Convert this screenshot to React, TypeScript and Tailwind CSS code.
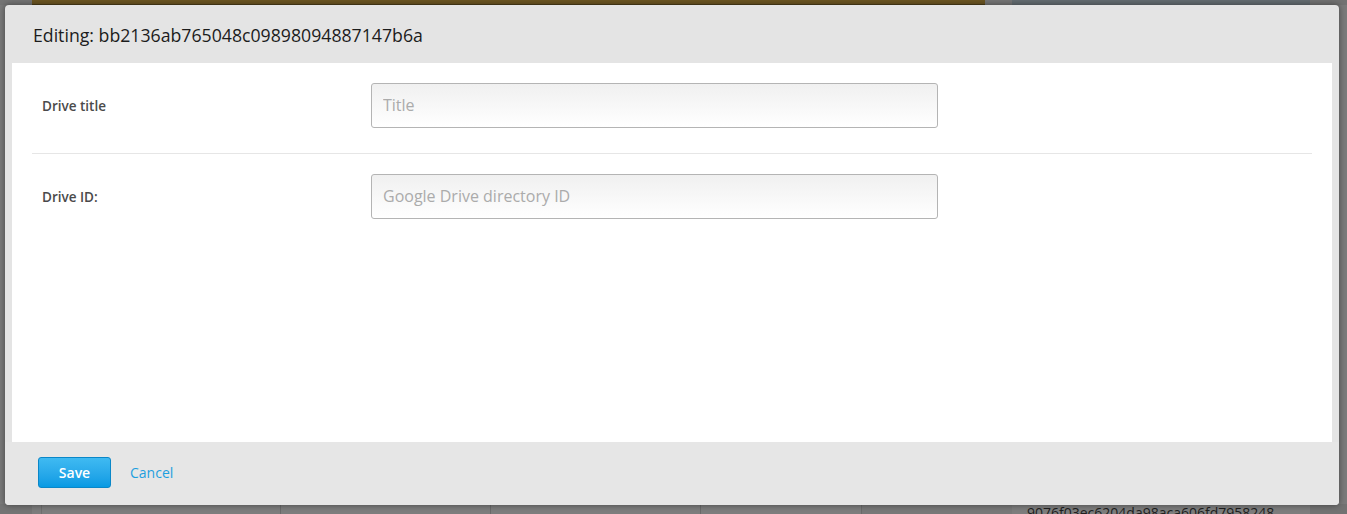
import React from "react";

const font = { fontFamily: '"Open Sans", "Noto Sans", "DejaVu Sans", sans-serif' };

function Backdrop() {
    // dimmed page that sits underneath the dialog
    return (
        <div className="absolute inset-0 flex flex-col bg-[#7a7a7a]">
            <div className="flex h-[5px]">
                <div className="w-[32px] bg-[#747474]"></div>
                <div className="w-[953px] bg-[#6b5522] border-b border-[#4d3d18]"></div>
                <div className="w-[27px] bg-[#767676]"></div>
                <div className="w-[298px] bg-[#646c71]"></div>
                <div className="flex-1 bg-[#727272]"></div>
            </div>
            <div className="flex-1"></div>
            <div className="flex h-[10px]">
                <div className="w-[32px] bg-[#747474]"></div>
                <div className="w-[10px] bg-[#7c7c7c] border-r border-[#6e6e6e]"></div>
                <div className="w-[239px] bg-[#7d7d7d] border-r border-[#6a6a6a]"></div>
                <div className="w-[210px] bg-[#7d7d7d] border-r border-[#6a6a6a]"></div>
                <div className="w-[210px] bg-[#7d7d7d] border-r border-[#6a6a6a]"></div>
                <div className="w-[161px] bg-[#7d7d7d] border-r border-[#6a6a6a]"></div>
                <div className="w-[150px] bg-[#787878]"></div>
                <div className="w-[298px] bg-[#7d7d7d] overflow-hidden pl-[15px]">
                    <div className="text-[14px] leading-[14px] pt-[2px] text-[#1f1f1f] whitespace-nowrap">9076f03ec6204da98aca606fd7958248</div>
                </div>
                <div className="flex-1 bg-[#727272]"></div>
            </div>
        </div>
    );
}

function Field({ label, placeholder, last }: { label: string; placeholder: string; last?: boolean }) {
    return (
        <div className={`flex items-start pt-[20px] pb-[25px] ${last ? "" : "border-b border-[#e6e6e6]"}`}>
            <label className="w-[339px] pl-[10px] h-[45px] flex items-center pt-[1px] text-[13.5px] font-semibold text-[#4a4a4a]">{label}</label>
            <input
                placeholder={placeholder}
                className="w-[567px] h-[45px] rounded-[3px] border border-[#b4b4b4] bg-gradient-to-b from-[#f0f0f0] to-white px-[11px] pb-[1px] text-[16px] text-[#333] placeholder:text-[#ababab] outline-none"
                style={font}
            />
        </div>
    );
}

export default function App() {
    return (
        <div className="relative w-[1347px] h-[514px] overflow-hidden" style={font}>
            <Backdrop />

            <div className="absolute left-[5px] top-[5px] w-[1334px] h-[500px] rounded-[4px] bg-[#e4e4e4] flex flex-col shadow-[0_0_6px_rgba(0,0,0,0.45)]">
                <header className="h-[58px] flex items-center px-[28px]">
                    <h1 className="text-[17.7px] text-[#1c1c1c] pt-[2px]">Editing: bb2136ab765048c09898094887147b6a</h1>
                </header>

                <main className="flex-1 mx-[7px] bg-white px-[20px]">
                    <Field label="Drive title" placeholder="Title" />
                    <Field label="Drive ID:" placeholder="Google Drive directory ID" last />
                </main>

                <footer className="h-[63px] bg-[#e6e6e6] rounded-b-[4px] flex items-center pl-[33px] gap-[19px] pb-[3px]">
                    <button className="w-[73px] h-[31px] rounded-[3px] border border-[#0a87c8] bg-gradient-to-b from-[#3fbaf2] to-[#069ae3] text-white text-[14px] font-semibold">
                        Save
                    </button>
                    <button className="text-[14px] text-[#1e9fdf]">Cancel</button>
                </footer>
            </div>
        </div>
    );
}
